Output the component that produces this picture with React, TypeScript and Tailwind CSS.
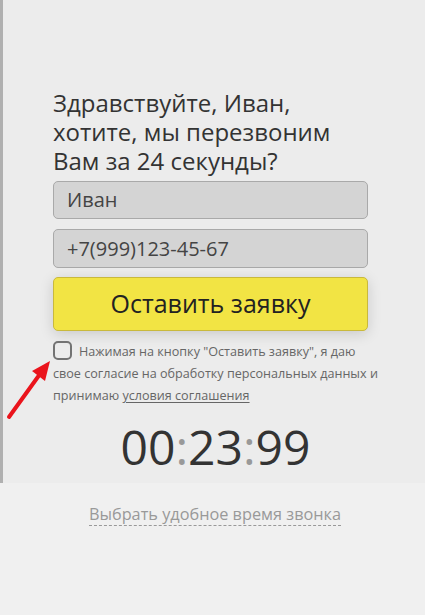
export default function App() {
  return (
    <div className="relative w-[425px] h-[615px] bg-[#f0f0f0] overflow-hidden font-['Open_Sans',sans-serif]">
      <div className="h-[483px] bg-[#ececec] border-l-[3px] border-[#b0b0b0] pl-[50px] pt-[88px]">
        <div className="w-[315px]">
          <h1 className="text-[24px] leading-[29px] text-[#333] font-normal">
            Здравствуйте, Иван,
            <br />
            хотите, мы перезвоним
            <br />
            Вам за 24 секунды?
          </h1>

          <div className="mt-[6px] h-[38px] rounded-[5px] border border-[#a9a9a9] bg-[#d4d4d4] flex items-center px-[13px] text-[20px] text-[#444]">
            Иван
          </div>
          <div className="mt-[10px] h-[39px] rounded-[5px] border border-[#a9a9a9] bg-[#d4d4d4] flex items-center px-[13px] text-[20px] text-[#444]">
            +7(999)123-45-67
          </div>

          <button className="mt-[9px] w-full h-[54px] rounded-[5px] border border-[#c9b93c] bg-[#f2e444] text-[25px] text-[#222] shadow-[0_3px_14px_rgba(0,0,0,0.15)]">
            Оставить заявку
          </button>

          <p className="mt-[10px] w-[330px] text-[12.6px] leading-[22px] text-[#666]">
            <span className="inline-block align-[-4px] w-[19px] h-[19px] rounded-[5px] border-2 border-[#737373] mr-[7px]" />
            Нажимая на кнопку "Оставить заявку", я даю свое согласие на
            обработку персональных данных и принимаю{" "}
            <span className="underline underline-offset-2">условия соглашения</span>
          </p>

          <div className="mt-[16px] pl-[10px] text-center text-[48px] leading-none text-[#333]">
            00<span className="text-[#999]">:</span>23<span className="text-[#999]">:</span>99
          </div>
        </div>
      </div>

      <div className="flex justify-center pt-[20px] pl-[5px]">
        <span className="text-[16.3px] leading-[22px] text-[#999] border-b border-dashed border-[#999]">
          Выбрать удобное время звонка
        </span>
      </div>

      <svg
        className="absolute left-0 top-[355px]"
        width="60"
        height="70"
        viewBox="0 0 60 70"
      >
        <line x1="9" y1="62" x2="40" y2="19" stroke="#ea141c" strokeWidth="4" strokeLinecap="round" />
        <polygon points="50,6 45,26 32,16" fill="#ea141c" />
      </svg>
    </div>
  );
}
